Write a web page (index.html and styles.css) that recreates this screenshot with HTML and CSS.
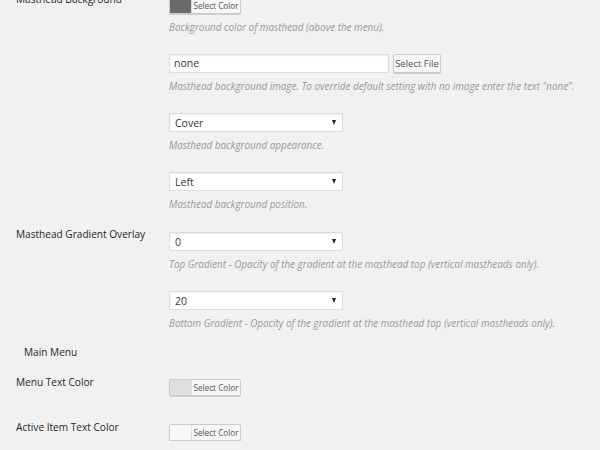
FILE: index.html
```html
<!DOCTYPE html>
<html>
<head>
<meta charset="utf-8">
<link rel="stylesheet" href="styles.css">
</head>
<body>
<div class="page">
  <div class="row first">
    <div class="label">Masthead Background</div>
    <div class="field">
      <div class="item">
        <div class="picker picker-top"><span class="swatch sw-dark"></span><span class="pick-btn">Select Color</span></div>
        <div class="desc">Background color of masthead (above the menu).</div>
      </div>
      <div class="item">
        <div class="file-line"><div class="input">none</div><div class="btn">Select File</div></div>
        <div class="desc">Masthead background image. To override default setting with no image enter the text "none".</div>
      </div>
      <div class="item">
        <div class="select"><span>Cover</span><span class="arrow"></span></div>
        <div class="desc">Masthead background appearance.</div>
      </div>
      <div class="item">
        <div class="select"><span>Left</span><span class="arrow"></span></div>
        <div class="desc">Masthead background position.</div>
      </div>
    </div>
  </div>
  <div class="row gradient">
    <div class="label">Masthead Gradient Overlay</div>
    <div class="field">
      <div class="item">
        <div class="select"><span>0</span><span class="arrow"></span></div>
        <div class="desc">Top Gradient - Opacity of the gradient at the masthead top (vertical mastheads only).</div>
      </div>
      <div class="item">
        <div class="select"><span>20</span><span class="arrow"></span></div>
        <div class="desc">Bottom Gradient - Opacity of the gradient at the masthead top (vertical mastheads only).</div>
      </div>
    </div>
  </div>
  <h3 class="section">Main Menu</h3>
  <div class="row menu-text">
    <div class="label label-pick">Menu Text Color</div>
    <div class="field">
      <div class="picker"><span class="swatch sw-light"></span><span class="pick-btn">Select Color</span></div>
    </div>
  </div>
  <div class="row active-text">
    <div class="label label-pick">Active Item Text Color</div>
    <div class="field">
      <div class="picker"><span class="swatch sw-white"></span><span class="pick-btn">Select Color</span></div>
    </div>
  </div>
</div>
</body>
</html>
```
FILE: styles.css
```css
html, body {
  margin: 0;
  padding: 0;
  background: #f1f1f1;
  font-family: "Open Sans", "Liberation Sans", sans-serif;
  color: #23282d;
  overflow: hidden;
}
.page {
  margin-top: -8px;
}
.row {
  display: flex;
}
.row.gradient { margin-top: 15px; }
.row.menu-text { margin-top: 14px; }
.row.active-text { margin-top: 23px; }
.label {
  width: 154px;
  padding-left: 16px;
  margin-right: -1px;
  font-size: 10.1px;
  font-weight: 400;
  line-height: 15px;
  color: #23282d;
}
.label-pick {
  padding-top: 1px;
}
.field {
  padding-top: 5px;
}
.item + .item {
  margin-top: 19px;
}
.desc {
  margin-top: 5px;
  font-size: 9.9px;
  line-height: 16px;
  font-style: italic;
  color: #999;
  white-space: nowrap;
}
.picker {
  display: flex;
  width: 72px;
  height: 17px;
  box-sizing: border-box;
  border: 1px solid #ccc;
  border-radius: 2px;
  background: #f7f7f7;
  box-shadow: 0 1px 0 #ccc;
  overflow: hidden;
}
.picker-top { margin-bottom: 4px; }
.swatch {
  width: 21px;
  height: 100%;
}
.sw-dark { background: #6b6b6b; }
.sw-light { background: #e0dfdd; }
.sw-white { background: #f7f7f7; }
.pick-btn {
  flex: 1;
  border-left: 1px solid #ddd;
  font-size: 8.2px;
  line-height: 15px;
  text-align: center;
  color: #555;
}
.file-line {
  display: flex;
  gap: 4px;
}
.input {
  width: 220px;
  height: 19px;
  box-sizing: border-box;
  border: 1px solid #ddd;
  background: #fff;
  box-shadow: inset 0 1px 2px rgba(0,0,0,0.07);
  font-size: 10.5px;
  line-height: 17px;
  padding-left: 4px;
  color: #32373c;
}
.btn {
  width: 48px;
  height: 19px;
  box-sizing: border-box;
  border: 1px solid #ccc;
  border-radius: 2px;
  background: #f7f7f7;
  box-shadow: 0 1px 0 #ccc;
  font-size: 9.5px;
  line-height: 17px;
  text-align: center;
  color: #555;
}
.select {
  display: flex;
  align-items: center;
  justify-content: space-between;
  width: 174px;
  height: 19px;
  box-sizing: border-box;
  border: 1px solid #ddd;
  background: #fff;
  box-shadow: inset 0 1px 2px rgba(0,0,0,0.07);
  font-size: 10.5px;
  padding: 0 6px 0 5px;
  color: #32373c;
}
.arrow {
  width: 0;
  height: 0;
  border-left: 2.5px solid transparent;
  border-right: 2.5px solid transparent;
  border-top: 5px solid #222;
}
.section {
  margin: 14px 0 0 24px;
  font-size: 10.1px;
  font-weight: 400;
  line-height: 15px;
  color: #23282d;
}
```
